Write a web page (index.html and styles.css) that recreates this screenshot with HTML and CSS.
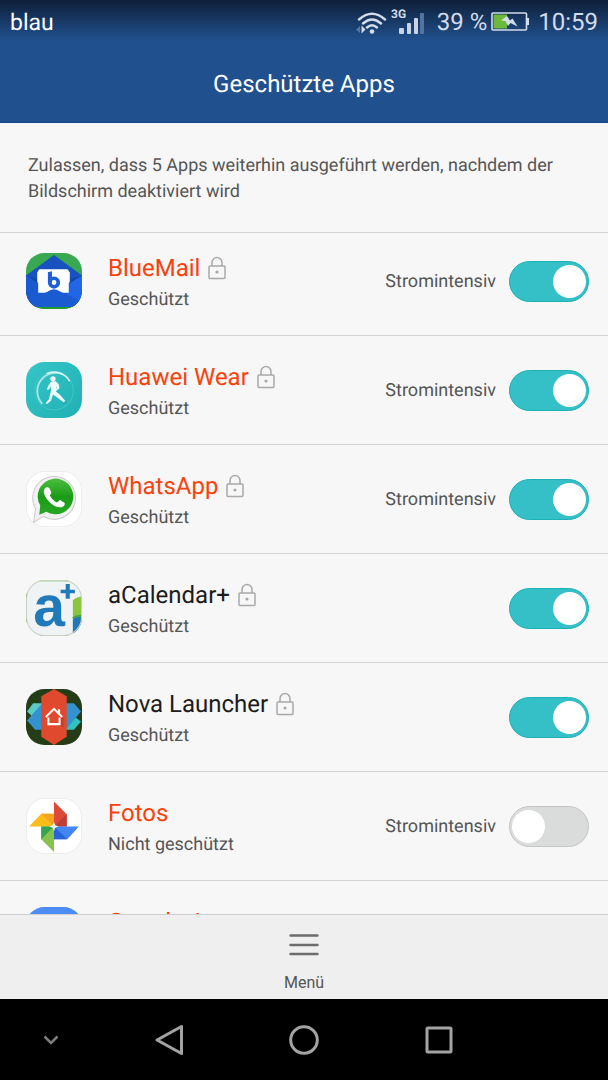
FILE: index.html
```html
<!DOCTYPE html>
<html lang="de">
<head>
<meta charset="utf-8">
<meta name="viewport" content="width=device-width, initial-scale=1">
<title>Geschützte Apps</title>
<link rel="stylesheet" href="styles.css">
</head>
<body>
<svg class="sprite" aria-hidden="true">
  <symbol id="lock" viewBox="0 0 18 24">
    <path d="M4 10V6.5a5 5 0 0 1 10 0V10" fill="none" stroke="#a9a9a9" stroke-width="1.5"/>
    <rect x="1" y="10" width="16" height="12.500" rx="1" fill="none" stroke="#a9a9a9" stroke-width="1.500"/>
    <circle cx="9" cy="16" r="1.600" fill="#a9a9a9"/>
  </symbol>
  <clipPath id="tile"><rect width="55" height="55" rx="18"/></clipPath>
</svg>

<header class="header">
  <div class="status">
    <span class="carrier">blau</span>
    <div class="indicators">
      <svg class="signals" width="70" height="30" viewBox="0 -2 70 30" aria-label="WLAN und 3G">
        <g fill="none" stroke="#d3dcea" stroke-width="2.500" stroke-linecap="round">
          <path d="M4 10.500q13-11.500 26 0"/>
          <path d="M8 14.500q9-8 18 0"/>
          <path d="M12 18.500q5-4.500 10 0"/>
        </g>
        <circle cx="17" cy="22.500" r="2.300" fill="#d3dcea"/>
        <path d="M5 17v7l-4-3.500z" fill="#58779f"/>
        <path d="M6.500 16.500v8l4-4z" fill="#d3dcea"/>
        <text x="36" y="9" class="net">3G</text>
        <g fill="#c9d4e4">
          <rect x="44" y="19" width="5" height="6" rx="1"/>
          <rect x="52" y="14" width="4" height="11" rx="1"/>
          <rect x="59" y="9" width="4" height="16" rx="1"/>
        </g>
        <rect x="65" y="4" width="4" height="21" rx="1" fill="#52749f"/>
      </svg>
      <span class="percent">39 %</span>
      <svg class="battery" width="39" height="20" viewBox="0 0 39 20" aria-label="Akku lädt">
        <rect x="1" y="1" width="34.500" height="17" rx="1" fill="none" stroke="#d3dcea" stroke-width="1.600"/>
        <path d="M36 6h2v7h-2z" fill="#d3dcea"/>
        <rect x="2.500" y="2.500" width="13.500" height="14" fill="#6cb83c"/>
        <path d="M10 8.500L16 4l3 4.500L21.500 6.500 26.500 14.500 19.500 11 17 14 14.500 9z" fill="#d3dcea"/>
      </svg>
      <time class="clock">10:59</time>
    </div>
  </div>
  <h1 class="title">Geschützte Apps</h1>
</header>

<main class="content">
  <p class="intro">Zulassen, dass 5 Apps weiterhin ausgeführt werden, nachdem der Bildschirm deaktiviert wird</p>
  <ul class="apps">
    <li class="app app-first">
      <svg class="icon" viewBox="0 0 55 55" aria-hidden="true">
        <g clip-path="url(#tile)">
          <path d="M0 0h55v55H0z" fill="#38a852"/>
          <path d="M0 22L27.500 2 55 22v31H0z" fill="#1752c0"/>
          <path d="M0 22l22 14L0 50z" fill="#1a59cf"/>
          <path d="M55 22L33 36l22 14z" fill="#2166e6"/>
          <path d="M0 22l13 8v-4z" fill="#1247ac"/>
          <path d="M55 22l-13 8v-4z" fill="#1247ac"/>
          <path d="M12 18q0-2 2-2h26q2 0 2 2l1 1v9l-1 2v9h-30v-9l-1-2v-9z" fill="#fff"/>
          <path d="M0 53V48l21-10q6.500-5 13 0l21 10v5z" fill="#1b5bd2"/>
          <path d="M0 53h55v2H0z" fill="#229b2d"/>
        </g>
        <path d="M21.500 19l4-1v11h-4z" fill="#1c5fd6"/>
        <circle cx="27.500" cy="29" r="4.200" fill="none" stroke="#1c5fd6" stroke-width="3.600"/>
      </svg>
      <div class="text">
        <label class="name hot" for="s1">BlueMail <svg class="lock"><use href="#lock"/></svg></label>
        <span class="state">Geschützt</span>
      </div>
      <span class="usage">Stromintensiv</span>
      <input class="switch" type="checkbox" id="s1" checked>
    </li>
    <li class="app">
      <svg class="icon" viewBox="0 0 55 55" aria-hidden="true">
        <defs><linearGradient id="wear" x1="0" y1="0" x2="1" y2="1"><stop offset="0" stop-color="#35c6c8"/><stop offset="1" stop-color="#20b0b3"/></linearGradient></defs>
        <rect width="55" height="55" rx="18" fill="url(#wear)"/>
        <circle cx="27.500" cy="28" r="19" fill="none" stroke="#43c3c6"/>
        <path d="M16 41A18 18 0 0 1 36 12" fill="none" stroke="#a9e8e8" stroke-width="1.800"/>
        <path d="M20 11.500A18 18 0 0 1 43 19" fill="none" stroke="#d8f6f6" stroke-width="1.500"/>
        <circle cx="26.500" cy="16.500" r="2.600" fill="#fff"/>
        <path d="M24.500 19.500l4.500-.5 3 2.500 1 4-3.500 3-1-1 2-2-.5-1.500-.5 5 4 3.500 5 5.500-1.500 1.500-6-4.500-4.500-3-2 6-4 3.500-1-1.500 3-3.500 2-8v-5l-1.500 3-2 1-.5-1 1.500-3.500z" fill="#f1ffff"/>
      </svg>
      <div class="text">
        <label class="name hot" for="s2">Huawei Wear <svg class="lock"><use href="#lock"/></svg></label>
        <span class="state">Geschützt</span>
      </div>
      <span class="usage">Stromintensiv</span>
      <input class="switch" type="checkbox" id="s2" checked>
    </li>
    <li class="app">
      <svg class="icon" viewBox="0 0 55 55" aria-hidden="true">
        <defs><linearGradient id="wa" x1="0" y1="0" x2="0" y2="1"><stop offset="0" stop-color="#4dbd3d"/><stop offset=".5" stop-color="#1a9c19"/><stop offset="1" stop-color="#26a823"/></linearGradient></defs>
        <rect x=".5" y=".5" width="54" height="54" rx="18" fill="#fff" stroke="#eee"/>
        <path d="M7.500 50.500l2-13.500A21 21 0 1 1 17 44.500z" fill="#f1f1f1" stroke="#ccc"/>
        <path d="M13 43l1-9A17.500 17.500 0 1 1 20 40z" fill="url(#wa)"/>
        <path d="M20 16q2-.5 3 1l2 4-1.500 3q2.500 5 7 7l3-2.500 4.500 3q.5 3-3 4-6 1-12-5-6-6-5.500-11 .5-3 2.500-3.500z" fill="#fff"/>
      </svg>
      <div class="text">
        <label class="name hot" for="s3">WhatsApp <svg class="lock"><use href="#lock"/></svg></label>
        <span class="state">Geschützt</span>
      </div>
      <span class="usage">Stromintensiv</span>
      <input class="switch" type="checkbox" id="s3" checked>
    </li>
    <li class="app">
      <svg class="icon" viewBox="0 0 55 55" aria-hidden="true">
        <g clip-path="url(#tile)">
          <path d="M0 0h55v55H0z" fill="#f0f3f4"/>
          <path d="M46 20q3-3 9-4v20q-6-1-9 2z" fill="#8bc53f"/>
          <path d="M46 38q4-3 9-2v19H46z" fill="#2079b8"/>
          <path d="M46 37.500q4-3 9-2" fill="none" stroke="#46a346" stroke-width="2"/>
          <path d="M0 0h55v1.500H0z" fill="#9bd18a"/>
          <path d="M0 12h1v30H0z" fill="#6e8d45"/>
          <path d="M0 54h55v1H0z" fill="#777"/>
          <path d="M39 4h4v5.500h5V13h-5v5.500h-4V13h-5V9.500h5z" fill="#2079b8"/>
        </g>
        <rect x=".5" y=".5" width="54" height="54" rx="18" fill="none" stroke="#c8d2c4"/>
        <text x="7" y="45" class="logo-a">a</text>
      </svg>
      <div class="text">
        <label class="name" for="s4">aCalendar+ <svg class="lock"><use href="#lock"/></svg></label>
        <span class="state">Geschützt</span>
      </div>
      <input class="switch" type="checkbox" id="s4" checked>
    </li>
    <li class="app">
      <svg class="icon" viewBox="0 0 55 55" aria-hidden="true">
        <g clip-path="url(#tile)">
          <path d="M0 0h55v55H0z" fill="#253d16"/>
          <path d="M1 22l6-8h9v22z" fill="#5acbc9"/>
          <path d="M54 32l-7 8h-9V20z" fill="#31c3c2"/>
          <path d="M16 14v26H9L1 31z" fill="#3592d1"/>
          <path d="M39 14h8l7 8-15 18z" fill="#3592d1"/>
          <path d="M27.500 0L40 7v40l-12.500 8L15 47V7z" fill="#e0492e"/>
          <path d="M27 34h7v-8l3 3v9z" fill="#c63f28"/>
        </g>
        <path d="M19.500 27.500l8-8 8 8M32.500 20v4M22 28v6.500h11V28" fill="none" stroke="#fff" stroke-width="2"/>
      </svg>
      <div class="text">
        <label class="name" for="s5">Nova Launcher <svg class="lock"><use href="#lock"/></svg></label>
        <span class="state">Geschützt</span>
      </div>
      <input class="switch" type="checkbox" id="s5" checked>
    </li>
    <li class="app">
      <svg class="icon" viewBox="0 0 55 55" aria-hidden="true">
        <rect x=".5" y=".5" width="54" height="54" rx="18" fill="#fff" stroke="#eee"/>
        <path d="M27.500 3.500L40 16v12H27.500z" fill="#dc4b38"/>
        <path d="M40 16v12H27.500z" fill="#bf3e37"/>
        <path d="M3 28l12-12.500h12.500V28z" fill="#fdbd18"/>
        <path d="M15 15.500h12.500V28z" fill="#f2a51f"/>
        <path d="M27.500 28H52L40.500 40.500h-13z" fill="#4385f5"/>
        <path d="M27.500 28l13 12.500h-13z" fill="#2963da"/>
        <path d="M15 28h12.500v25L15 40.500z" fill="#86c34d"/>
        <path d="M15 28h12.500L15 40.500z" fill="#35a351"/>
        <path d="M27.500 23.500l1.200 3.300 3.300 1.200-3.300 1.200-1.200 3.300-1.200-3.300L23 28l3.300-1.200z" fill="#fff"/>
      </svg>
      <div class="text">
        <label class="name hot" for="s6">Fotos</label>
        <span class="state">Nicht geschützt</span>
      </div>
      <span class="usage">Stromintensiv</span>
      <input class="switch" type="checkbox" id="s6">
    </li>
    <li class="app">
      <svg class="icon" viewBox="0 0 55 55" aria-hidden="true">
        <rect width="55" height="55" rx="18" fill="#4b8cf5"/>
        <circle cx="33" cy="22" r="15" fill="#d6e4fb"/>
      </svg>
      <div class="text">
        <label class="name hot" for="s7">Google App</label>
        <span class="state">Nicht geschützt</span>
      </div>
      <span class="usage">Stromintensiv</span>
      <input class="switch" type="checkbox" id="s7">
    </li>
  </ul>
</main>

<footer class="toolbar">
  <button class="menu" type="button">
    <svg width="30" height="22" viewBox="0 0 30 22" aria-hidden="true"><path d="M1.500 1.500h27M1.500 11h27M1.500 20h27" stroke="#6d6d6d" stroke-width="2.400" stroke-linecap="round"/></svg>
    <span>Menü</span>
  </button>
</footer>

<nav class="nav" aria-label="Systemnavigation">
  <button class="key" type="button" aria-label="Ausblenden"><svg width="16" height="10" viewBox="0 0 16 10"><path d="M1.500 1.500L8 8l6.500-6.500" fill="none" stroke="#7d7d7d" stroke-width="2.500"/></svg></button>
  <button class="key" type="button" aria-label="Zurück"><svg width="30" height="32" viewBox="0 0 30 32"><path d="M27.500 2.500v27L3 16z" fill="none" stroke="#a3a3a3" stroke-width="3" stroke-linejoin="round"/></svg></button>
  <button class="key" type="button" aria-label="Startseite"><svg width="30" height="30" viewBox="0 0 30 30"><circle cx="15" cy="15" r="13.300" fill="none" stroke="#a3a3a3" stroke-width="3"/></svg></button>
  <button class="key" type="button" aria-label="Letzte Apps"><svg width="28" height="28" viewBox="0 0 28 28"><rect x="2" y="2" width="24" height="24" rx="1" fill="none" stroke="#a3a3a3" stroke-width="3"/></svg></button>
</nav>
</body>
</html>
```

FILE: styles.css
```css
* {
  box-sizing: border-box;
}

body {
  display: flex;
  flex-direction: column;
  height: 100vh;
  margin: 0;
  background: #f7f7f7;
  color: #555;
  font-family: Roboto, "Liberation Sans", sans-serif;
  font-size: 18px;
  text-rendering: geometricPrecision;
}

button {
  padding: 0;
  border: 0;
  background: none;
  color: inherit;
  font: inherit;
}

svg {
  flex: none;
}

.sprite {
  position: absolute;
  width: 0;
  height: 0;
}

.header {
  flex: none;
  padding-bottom: 23px;
  border-bottom: 1px solid #17427f;
  background: linear-gradient(#0e1f38, #20508d 40px);
  color: #fff;
}

.status {
  display: flex;
  justify-content: space-between;
  align-items: center;
  height: 44px;
  padding: 0 10px;
  font-size: 24px;
}

.carrier {
  font-size: 23px;
}

.indicators {
  display: flex;
  align-items: center;
  color: #d3dcea;
}

.signals {
  margin-right: 12px;
}

.percent {
  margin-right: 4px;
}

.battery {
  margin-right: 8px;
}

.net {
  fill: #d3dcea;
  font-size: 12px;
  font-weight: 700;
}

.title {
  margin: 0;
  padding-top: 25px;
  font-size: 24px;
  font-weight: 400;
  line-height: 30px;
  text-align: center;
}

.content {
  flex: 1;
  min-height: 0;
  overflow: hidden;
}

.intro {
  margin: 0;
  padding: 30px 28px 27px;
  border-bottom: 1px solid #d4d4d4;
  line-height: 26px;
}

.apps {
  margin: 0;
  padding: 0;
  list-style: none;
}

.app {
  display: flex;
  align-items: center;
  height: 109px;
  padding: 0 19px 0 26px;
  border-bottom: 1px solid #d4d4d4;
}

.app-first {
  height: 103px;
  padding-bottom: 6px;
}

.icon {
  width: 56px;
  height: 56px;
  margin-right: 26px;
}

.logo-a {
  fill: #2079b8;
  font-family: "Liberation Sans", sans-serif;
  font-size: 56px;
  font-weight: 700;
}

.text {
  display: flex;
  flex: 1;
  flex-direction: column;
  gap: 4px;
  padding-top: 4px;
}

.name {
  display: flex;
  align-items: center;
  gap: 8px;
  color: #1c1c1c;
  font-size: 24px;
  line-height: 30px;
}

.hot {
  color: #f8420c;
}

.lock {
  width: 18px;
  height: 24px;
}

.state {
  line-height: 26px;
}

.usage {
  margin-right: 13px;
}

.switch {
  display: flex;
  flex: none;
  align-items: center;
  width: 80px;
  height: 41px;
  margin: 0;
  padding: 0 2px;
  border: 1px solid #c4c6c6;
  border-radius: 21px;
  background: #dadcdb;
  appearance: none;
}

.switch::before {
  width: 33px;
  height: 33px;
  border-radius: 50%;
  background: #fff;
  content: "";
}

.switch:checked {
  justify-content: flex-end;
  border-color: #1db0b5;
  background: #34c0c6;
}

.toolbar {
  display: flex;
  flex: none;
  justify-content: center;
  height: 85px;
  border-top: 1px solid #cfcfcf;
  background: #efefef;
}

.menu {
  display: flex;
  flex-direction: column;
  align-items: center;
  gap: 16px;
  padding-top: 19px;
  font-size: 16px;
  line-height: 22px;
}

.nav {
  display: grid;
  flex: none;
  grid-template-columns: 3fr 4fr 4fr 4fr 3fr;
  height: 81px;
  background: #000;
}

.key {
  display: flex;
  justify-content: center;
  align-items: center;
}
```
